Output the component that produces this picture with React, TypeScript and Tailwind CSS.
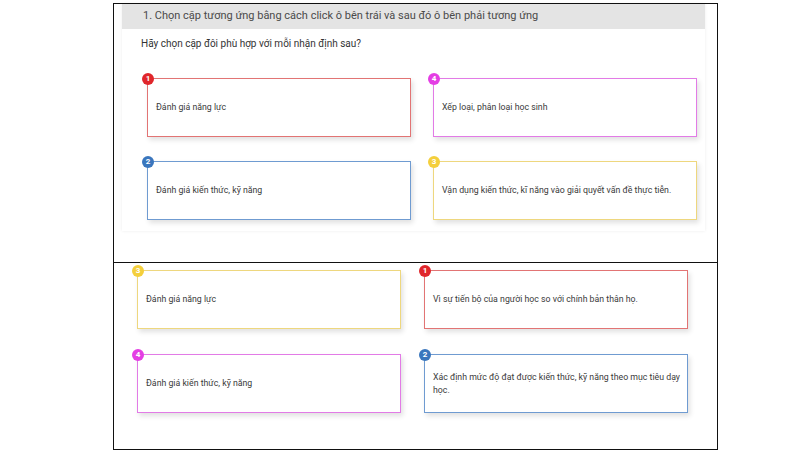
import React from 'react';

type Item = { n: number; text: string; color: 'red' | 'blue' | 'yellow' | 'pink' };

const borderCls: Record<Item['color'], string> = {
  red: 'border-[#e27474]',
  blue: 'border-[#6f9bd1]',
  yellow: 'border-[#eed77e]',
  pink: 'border-[#e27be6]',
};

const badgeCls: Record<Item['color'], string> = {
  red: 'bg-[#e0262b]',
  blue: 'bg-[#3a76bd]',
  yellow: 'bg-[#f4cf3c]',
  pink: 'bg-[#e43ee4]',
};

function Card({ item }: { item: Item }) {
  return (
    <div
      className={`relative flex h-[59px] w-[264px] items-center border bg-white pl-[8px] pr-[4px] shadow-[2px_3px_5px_rgba(0,0,0,0.12)] ${borderCls[item.color]}`}
    >
      <span
        className={`absolute -left-[6px] -top-[6px] flex h-[12px] w-[12px] items-center justify-center rounded-full text-[8px] font-bold leading-none text-white ${badgeCls[item.color]}`}
      >
        {item.n}
      </span>
      <p className="text-[8.75px] leading-[13px] text-[#3a3a3a]">{item.text}</p>
    </div>
  );
}

const topLeft: Item[] = [
  { n: 1, text: 'Đánh giá năng lực', color: 'red' },
  { n: 2, text: 'Đánh giá kiến thức, kỹ năng', color: 'blue' },
];
const topRight: Item[] = [
  { n: 4, text: 'Xếp loại, phân loại học sinh', color: 'pink' },
  { n: 3, text: 'Vận dụng kiến thức, kĩ năng vào giải quyết vấn đề thực tiễn.', color: 'yellow' },
];
const botLeft: Item[] = [
  { n: 3, text: 'Đánh giá năng lực', color: 'yellow' },
  { n: 4, text: 'Đánh giá kiến thức, kỹ năng', color: 'pink' },
];
const botRight: Item[] = [
  { n: 1, text: 'Vì sự tiến bộ của người học so với chính bản thân họ.', color: 'red' },
  { n: 2, text: 'Xác định mức độ đạt được kiến thức, kỹ năng theo mục tiêu dạy học.', color: 'blue' },
];

export default function App() {
  return (
    <div className="h-[450px] w-[794px] bg-white pt-[3px] font-['Roboto','Liberation_Sans',sans-serif]">
      <div className="ml-[113px] w-[605px]">
        {/* top panel */}
        <div className="h-[259px] border border-b-0 border-[#111] pl-[8px] pr-[12px]">
          <div className="h-[227px] shadow-[0_0_3px_rgba(0,0,0,0.08)]">
            <div className="flex h-[25px] items-center bg-[#e4e4e4] pl-[21px] text-[11px] text-[#4a4a4a]">
              1. Chọn cặp tương ứng bằng cách click ô bên trái và sau đó ô bên phải tương ứng
            </div>
            <p className="mt-[7px] pl-[19px] text-[10px] leading-[16px] text-[#333]">
              Hãy chọn cặp đôi phù hợp với mỗi nhận định sau?
            </p>
            <div className="mt-[26px] flex gap-[22px] pl-[25px]">
              <div className="flex flex-col gap-[24px]">
                {topLeft.map((it) => (
                  <Card key={it.n} item={it} />
                ))}
              </div>
              <div className="flex flex-col gap-[24px]">
                {topRight.map((it) => (
                  <Card key={it.n} item={it} />
                ))}
              </div>
            </div>
          </div>
        </div>
        {/* bottom panel */}
        <div className="h-[188px] border border-[#111] pl-[23px] pt-[7px]">
          <div className="flex gap-[23px]">
            <div className="flex flex-col gap-[25px]">
              {botLeft.map((it) => (
                <Card key={it.n} item={it} />
              ))}
            </div>
            <div className="flex flex-col gap-[25px]">
              {botRight.map((it) => (
                <Card key={it.n} item={it} />
              ))}
            </div>
          </div>
        </div>
      </div>
    </div>
  );
}
